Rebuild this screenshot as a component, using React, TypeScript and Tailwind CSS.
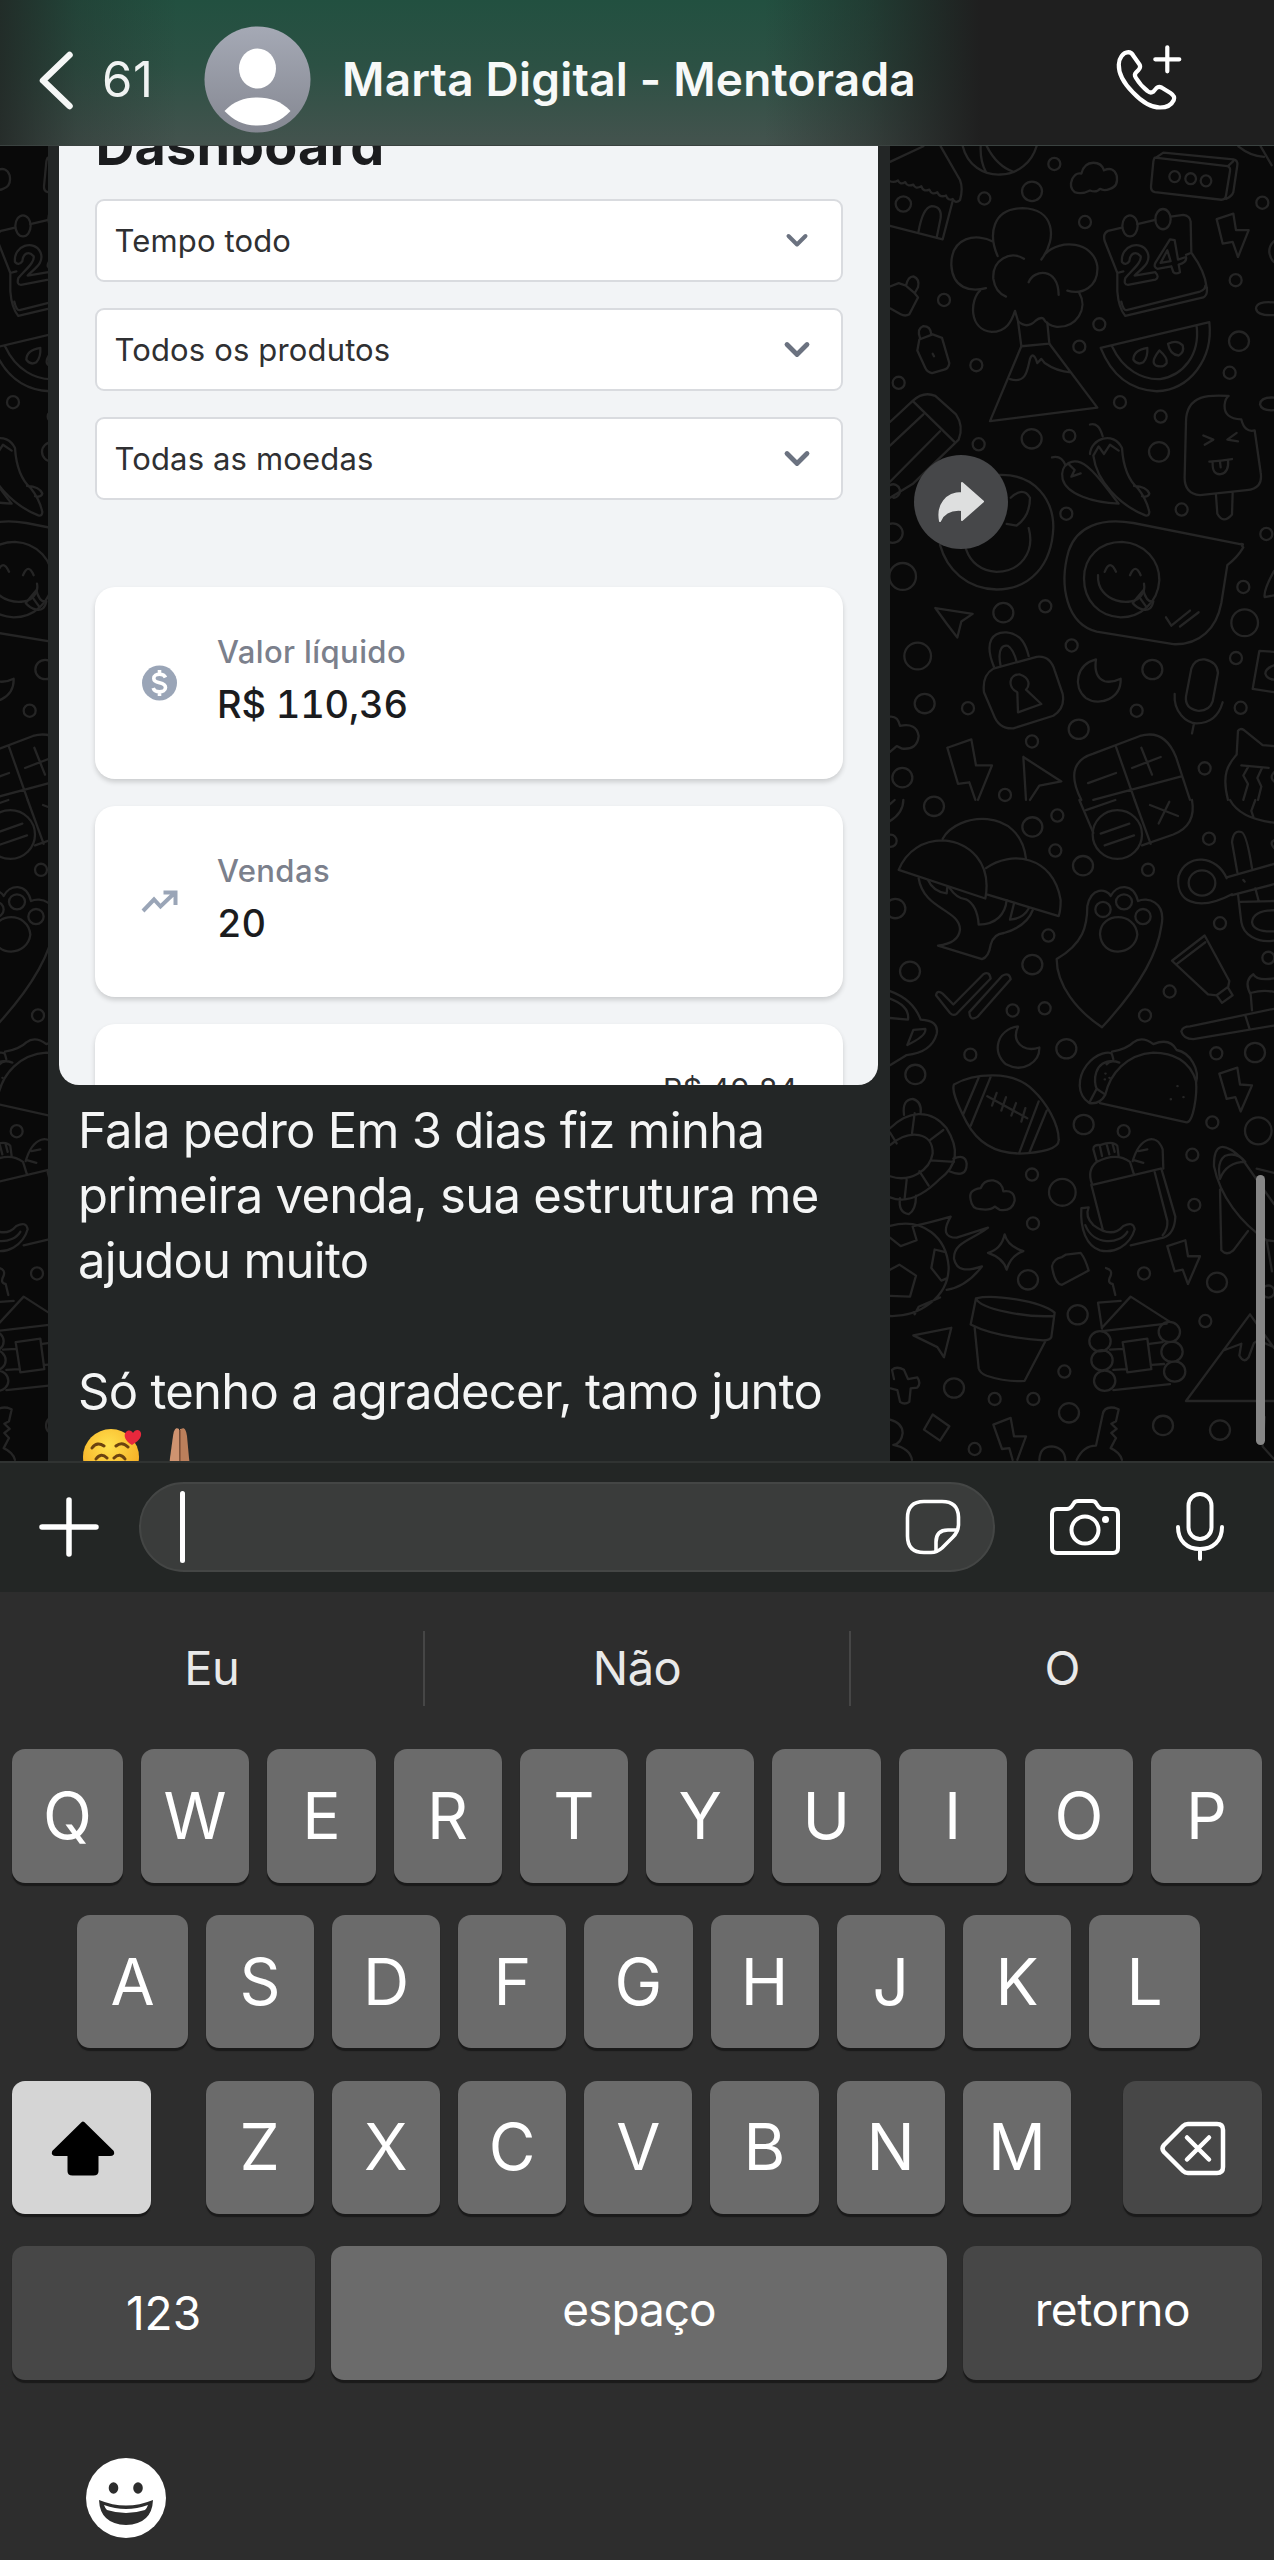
import type { ReactNode } from "react";

const ROW_ONE = ["Q", "W", "E", "R", "T", "Y", "U", "I", "O", "P"];
const ROW_TWO = ["A", "S", "D", "F", "G", "H", "J", "K", "L"];
const ROW_THREE = ["Z", "X", "C", "V", "B", "N", "M"];

const upperSmall = [
  [523, 57], [313, 139], [615, 195], [1147, 149], [1067, 333], [192, 380], [658, 438], [598, 491], [289, 535],
  [56, 577], [1049, 553], [720, 623], [842, 657], [296, 723], [568, 703], [905, 878], [559, 888], [496, 1108],
  [1090, 1062], [1068, 1231], [575, 1201], [264, 1350], [770, 1356], [1082, 1349], [456, 1429], [974, 1493],
  [375, 1556], [1159, 936],
];
const upperMedium = [
  [456, 122], [1077, 478], [455, 710], [837, 741], [370, 1123], [817, 1258], [134, 1339], [596, 1400], [67, 1515],
  [38, 934],
];
const upperLarge = [[68, 1037], [1094, 1147], [113, 1226]];

const lowerSmall = [
  [532, 37], [526, 120], [804, 166], [987, 92], [1020, 293], [505, 322], [869, 455], [795, 512], [398, 500],
  [494, 495], [271, 605], [1009, 602], [1165, 375], [997, 766], [731, 787], [937, 843], [456, 890], [459, 1006],
  [943, 962], [792, 1125], [976, 1238], [553, 1358], [344, 1423], [460, 1423], [284, 1542], [32, 97], [1165, 1168],
];
const lowerMedium = [
  [162, 15], [457, 64], [609, 156], [90, 407], [457, 391], [1125, 600], [559, 591], [106, 652], [611, 771],
  [444, 1140], [1011, 1146], [593, 1223], [222, 1397], [567, 1456], [849, 1486], [1020, 1497], [46, 258],
];
const lowerLarge = [[1135, 786], [547, 932]];

const upperPaths = [
  // house
  "M30 52 L130 15 M182 15 L240 95 Q250 115 240 143 Q226 152 218 140 Q205 146 198 132 Q180 138 172 124 Q155 132 148 118 Q130 124 124 110 Q106 118 100 106 Q82 112 76 100 Q60 108 54 96 Q42 102 30 98",
  "M218 145 L188 236 L30 204 M115 220 Q128 160 155 157 Q186 158 182 185 L170 232",
  "M47 152 A23 18 0 1 0 93 152 A23 18 0 1 0 47 152",
  // beach ball
  "M248 14 C262 60 310 84 362 82 C415 80 455 54 470 14 M302 14 Q300 50 318 76 M320 14 Q350 62 402 76",
  // cloud
  "M584 124 Q566 112 577 92 Q588 76 604 80 Q612 54 640 54 Q665 54 672 72 Q700 62 710 84 Q716 110 690 116 Q672 122 660 116 Q650 126 630 120 Q605 130 584 124 Z",
  // ticket box
  "M825 42 L1042 62 Q1052 64 1050 74 L1038 132 Q1036 142 1024 142 L825 124 Q812 122 813 110 L820 52 Q822 42 825 42 M828 42 L850 30 L1060 46 Q1074 48 1072 60 L1060 124 Q1056 134 1038 140 M1044 62 L1060 50",
  "M868 87 A16 13 0 1 0 900 87 A16 13 0 1 0 868 87 M916 92 A16 13 0 1 0 948 92 A16 13 0 1 0 916 92 M962 97 A16 13 0 1 0 994 97 A16 13 0 1 0 962 97",
  "M1075 15 Q1110 38 1152 40 M1142 15 L1175 60",
  // tree over the mountain
  "M353 276 C325 225 335 163 428 162 C520 163 535 230 484 284 M340 242 C290 220 212 230 214 298 C218 352 270 362 318 352",
  "M496 270 C540 235 640 240 652 300 C656 350 605 368 562 358 M300 358 C270 380 265 450 335 456 C380 456 395 430 405 406 L414 430 Q440 450 466 430 Q480 420 490 424 Q500 440 530 444 C590 446 625 400 598 364",
  "M432 282 C390 262 336 285 340 330 Q346 362 378 372 M446 338 C460 308 535 300 536 368 M414 430 L424 490 L508 484 L502 434",
  "M424 490 L330 668 L652 636 L508 484 M390 568 C440 580 442 545 450 520 Q460 500 472 530 L484 520 L494 530 Q530 550 572 552",
  // calendar
  "M712 316 L674 240 Q668 222 684 216 L726 208 M772 200 L826 190 M872 182 L910 178 Q930 180 932 194 L934 268 L918 273 M730 312 L712 316 L712 360 Q716 400 736 418 L970 374 Q984 368 980 350 Q974 310 934 268 M724 384 Q730 406 740 404 L960 360 Q976 356 976 346",
  "M727 204 A22 24 0 1 0 773 204 A22 24 0 1 0 727 204 M826 188 A23 24 0 1 0 872 188 A23 24 0 1 0 826 188",
  "M726 290 C720 250 784 236 802 266 C816 292 784 306 764 322 L826 314 Q840 326 826 332 L744 344 Q730 344 736 328 C760 306 786 290 782 276 C766 262 750 270 748 288 Q736 300 726 290 Z",
  "M870 236 L884 238 L894 284 L918 278 Q922 290 896 296 L900 314 Q888 320 880 314 L874 300 L832 306 Q820 302 826 292 Z M862 262 L842 292 L872 288 Z",
  // bolt
  "M1010 188 L1060 175 L1068 214 L1106 214 L1074 278 L1058 242 L1028 246 Z",
  "M1182 240 Q1166 252 1168 268 Q1172 284 1182 290 M1182 386 Q1130 382 1128 400 Q1130 418 1182 416 M1182 612 Q1142 610 1140 628 Q1144 644 1182 642",
  // bottles
  "M30 348 L56 340 L78 346 Q84 324 100 324 Q120 330 114 350 L104 364 L114 374 L88 414 Q76 420 62 414 L30 400 M80 348 L104 364",
  "M120 470 Q110 448 130 442 Q152 442 154 462 M118 474 L158 462 L186 470 L208 530 Q206 544 190 546 L156 554 Q142 552 136 542 L112 500 Z M158 508 L162 514",
  // watermelon
  "M662 494 L988 433 C1000 520 930 594 830 597 C750 594 695 560 662 494 Z M696 490 C730 548 790 570 840 568 C910 560 960 510 950 442",
  "M802 494 Q760 500 760 522 Q772 536 790 528 Q804 516 802 494 Z M838 500 Q810 528 828 536 Q850 542 860 530 Q864 518 838 500 Z M864 484 Q870 510 896 512 Q914 504 908 488 Q892 474 864 484 Z",
  // pencil
  "M30 670 L98 620 Q130 596 166 608 L228 652 Q252 680 236 712 L100 816 L30 850 M98 620 L222 716 M30 726 L130 652 M30 812 L180 692 M30 820 A20 16 0 1 1 40 850",
  // ice cream
  "M1046 608 C1000 606 918 600 918 670 L914 800 Q912 840 960 844 L1100 832 Q1150 828 1142 790 L1124 690 Q1094 696 1084 664 Q1030 662 1034 628 Q1036 614 1046 608 Z M1008 844 L1012 888 Q1030 914 1056 890 L1058 838",
  "M970 702 L1000 712 L974 724 M1070 696 L1042 712 L1074 716 M988 764 Q1024 762 1056 758 M998 766 Q996 796 1022 794 Q1048 790 1044 760 M1020 764 L1022 778",
  // peppers
  "M516 754 Q544 748 556 772 M548 806 C538 770 580 750 622 776 C660 800 690 840 716 864 C640 862 560 842 548 806 M566 770 L584 784 L574 800 L602 792 M630 676 Q656 670 668 704",
  "M630 746 C632 710 700 690 726 732 C730 780 748 810 774 828 Q800 854 808 884 Q808 894 796 892 C720 868 650 812 640 750 M640 750 L656 728 L672 746 L690 724 L716 738 M762 822 Q800 824 808 840 Q804 850 786 846",
  // donut behind the forward button
  "M350 796 C470 790 520 860 520 920 C516 1010 450 1068 350 1068 C260 1066 200 1020 180 962 M392 850 Q430 822 450 850 Q450 894 410 916 L380 912 M446 922 C466 980 420 1026 350 1026 Q280 1022 258 972",
  // sticker bubble
  "M1086 964 Q1094 958 1080 960 L760 910 C660 896 590 920 566 976 C536 1060 560 1150 650 1168 L880 1198 C960 1200 1010 1160 1024 1100 L1042 1010 Q1072 992 1090 968 Z",
  "M612 1042 C612 990 660 955 726 955 C796 958 838 1000 838 1046 C834 1100 780 1134 722 1134 C656 1132 612 1094 612 1042 Z M674 1026 Q690 994 708 1026 M750 1034 Q766 1004 782 1034 M654 1034 C650 1100 760 1112 784 1082 Q796 1070 792 1054",
  "M758 1100 L790 1070 Q800 1100 820 1096 Q814 1120 790 1116 Q770 1112 758 1100 M778 1086 L798 1108 M858 1134 L874 1154 L930 1118 M900 1156 L956 1122",
  // cursors
  "M166 1112 L278 1126 L244 1144 L232 1182 Q200 1150 166 1112 Z M430 1466 L544 1524 L478 1534 L450 1568 M430 1466 L438 1568",
  // padlock
  "M342 1252 C310 1190 340 1168 380 1170 C425 1174 438 1200 446 1226 M362 1250 C350 1204 372 1200 384 1202 Q400 1210 410 1240",
  "M340 1256 L470 1228 Q510 1224 524 1260 L548 1316 Q556 1350 520 1368 L400 1398 Q356 1400 340 1364 L312 1312 Q306 1272 340 1256 Z",
  "M412 1312 C380 1300 388 1268 420 1270 C450 1278 450 1296 438 1306 L484 1340 L414 1360 Z",
  // moon
  "M648 1234 C590 1246 576 1298 618 1326 C660 1348 724 1326 722 1280 Q696 1290 674 1286 Q640 1276 648 1234 Z",
  // microphone
  "M934 1256 Q944 1232 974 1234 Q1012 1240 1014 1266 L998 1334 Q988 1358 952 1356 Q914 1350 918 1322 Z M884 1316 C880 1360 920 1386 950 1386 Q1010 1386 1028 1336 M942 1386 L936 1410",
  // chat shapes at the edge
  "M1182 1024 Q1150 1070 1154 1086 L1182 1082 M1182 1216 L1138 1214 L1118 1304 L1182 1312 M1182 1248 Q1156 1256 1156 1268 Q1162 1282 1182 1282",
  // bolt
  "M202 1444 L274 1424 L288 1486 L336 1486 L294 1568 M202 1444 L234 1530 L268 1526 L286 1568",
  "M30 1370 Q54 1368 60 1392 Q110 1384 116 1416 Q112 1450 66 1446 L50 1440 L30 1454",
  // calculator
  "M604 1568 C560 1500 590 1470 640 1458 L780 1416 C840 1402 870 1430 888 1466 L930 1568 M708 1442 L764 1568 M640 1568 L904 1512 M624 1528 L708 1504 M756 1492 L842 1466 M784 1444 L816 1508",
  // cat
  "M1044 1568 C1022 1500 1050 1480 1070 1460 L1074 1404 Q1080 1396 1092 1402 L1148 1438 L1182 1440 M1084 1486 L1166 1492 M1104 1490 L1090 1510 L1104 1530 L1090 1568 M1146 1492 L1132 1516 L1144 1536 L1134 1568 M1182 1502 Q1168 1514 1182 1524",
];

const lowerPaths = [
  // calculator, lower half
  "M598 0 L640 78 M764 0 L812 104 M618 24 L706 0 M786 108 L880 82 Q950 60 936 0 M810 12 L894 38 M868 4 L836 56 M662 80 L748 56 M674 108 L762 84",
  "M638 82 A74 58 0 1 0 786 82 A74 58 0 1 0 638 82",
  "M1050 0 Q1080 44 1182 54 M1126 0 L1114 26 L1120 40",
  "M30 50 Q70 30 70 0 M30 10 L44 0",
  // mushrooms
  "M56 166 C80 120 130 96 188 96 C270 100 336 150 316 234 Z M188 92 C230 30 420 14 438 140 M318 162 C390 120 520 130 542 238 Q542 262 536 276 L320 224",
  "M116 186 C130 260 240 260 240 308 Q236 340 174 346 L306 378 Q326 374 332 344 Q340 318 372 316 Q440 300 458 262 M144 190 Q160 218 200 222 L202 206 M208 208 Q230 234 258 236 Q292 250 296 296 C350 296 376 270 380 238 M402 246 L390 284 Q430 282 446 258",
  // ticks
  "M168 464 Q172 450 188 460 L220 486 L310 414 Q328 406 332 424 L230 508 Q220 514 210 506 Z M268 504 L366 418 Q388 408 392 426 L294 514 Q270 528 268 504 Z",
  // paw
  "M530 378 C610 340 622 300 622 252 C634 206 680 210 692 228 C710 200 760 196 774 240 C800 230 860 240 844 300 C830 380 760 460 666 540 C590 500 530 440 530 378 Z",
  "M646 260 A23 18 0 1 0 692 260 A23 18 0 1 0 646 260 M708 242 A24 18 0 1 0 756 242 A24 18 0 1 0 708 242 M766 277 A23 18 0 1 0 812 277 A23 18 0 1 0 766 277",
  "M660 318 C662 266 766 264 772 320 C764 372 664 376 660 318 Z",
  // propeller
  "M1040 186 C1010 130 920 126 896 180 C884 240 950 268 1056 224 M926 197 A40 30 0 1 0 1006 197 A40 30 0 1 0 926 197 M1040 184 L1182 152 M1056 226 L1182 200 M1072 172 L1056 100 Q1060 70 1084 76 Q1100 80 1116 162 M1126 210 L1136 240 M1074 224 L1084 290 C1090 320 1130 340 1182 334 M1082 242 L1182 240 M1182 262 Q1120 262 1116 290 Q1120 314 1182 312 M1090 190 L1094 194",
  "M1182 96 Q1168 100 1182 114",
  // tube
  "M974 322 L876 382 L984 462 L1010 464 L1026 482 L1058 464 L1044 446 L1048 430 Z M976 338 L890 390 M1010 464 L1044 444",
  // brush
  "M904 550 Q908 538 930 538 L1182 496 M1182 536 L940 568 Q910 568 904 550 M1096 512 L1108 542 M1116 500 L1112 462 Q1090 430 1120 414 Q1130 430 1182 424 M1114 458 Q1150 450 1182 456",
  "M30 454 Q100 474 122 522 Q178 524 170 556 Q154 600 80 606 L30 630 M30 472 Q90 490 84 522 L30 518 M82 582 L100 546 L136 544 Q140 560 82 582",
  // moon
  "M414 538 C350 546 334 600 378 628 C430 650 480 622 478 588 Q450 596 428 586 Q396 570 414 538 Z",
  // football
  "M222 676 C280 650 400 640 460 690 C500 720 536 770 536 806 C540 830 480 838 420 840 C340 840 290 810 260 766 C230 720 214 690 222 676 Z M296 660 L250 746 M332 658 L272 774 M476 716 L418 838 M500 738 L448 838",
  "M322 704 L442 756 M350 696 L336 726 M378 706 L364 738 M408 720 L394 750 M436 732 L424 764",
  // taco
  "M660 720 L920 766 C940 766 952 700 948 668 C930 620 880 600 820 600 C740 604 690 650 676 700 Q660 724 628 720 C590 700 592 660 620 630 C650 600 690 596 696 604 L700 616 M696 598 Q740 592 760 576 Q786 560 820 580 Q870 564 890 594 C930 600 960 640 948 672 M700 620 C640 620 640 670 650 686 L676 700 M650 686 L630 716 M680 628 Q690 616 718 624",
  "M892 680 h1 M872 711 h1 M910 706 h1 M676 650 h1 M688 660 h1 M674 664 h1",
  // bolt
  "M1018 650 L1072 636 L1080 676 L1116 678 L1082 740 L1066 706 L1040 710 Z",
  // turtle
  "M72 748 Q66 712 98 710 Q126 716 122 744 M30 780 C80 740 150 730 200 780 C240 830 230 870 180 900 C130 940 80 960 30 944 M30 820 C90 780 160 790 158 840 C150 880 90 910 30 894 M104 744 L96 792 M190 784 L150 808 M222 860 L152 856 M146 916 L118 882 M74 946 L80 902 M30 790 L50 816 M208 882 Q260 900 260 864 Q256 840 220 852 M60 946 Q54 980 86 984 Q108 974 108 940",
  // cloud
  "M272 950 Q264 926 302 922 Q312 902 340 904 Q366 908 370 930 Q404 926 404 952 Q396 978 360 974 L344 966 Q330 976 300 972 Q276 972 272 950 Z",
  // lunch bag
  "M650 858 L640 830 Q640 818 660 820 Q700 808 712 822 L716 846 M660 824 L666 846 M680 818 L688 842 M698 818 L704 836 M636 912 Q620 880 650 860 Q710 836 750 860 L762 890 M640 914 L842 876 M758 858 C780 800 830 790 848 830 L850 876 M776 834 L802 830 M764 856 L790 862",
  "M634 914 L668 1020 M824 884 L862 1000 Q864 1020 848 1034 M844 876 L886 990 Q884 1030 850 1040 L752 1058 M604 970 L626 968 Q614 990 640 1010 C680 1034 710 1030 730 1012 Q760 1000 764 1020 C750 1060 700 1078 660 1070 C620 1060 600 1020 604 970 M616 1010 C640 1060 720 1056 742 1026",
  // rocket
  "M1182 960 L1084 850 Q1000 790 1002 870 C1020 940 1080 1004 1160 1046 L1182 1048 M1020 926 L1024 1070 Q1040 1084 1060 1070 L1104 1024 M1020 900 Q1040 860 1096 860 Q1070 834 1034 846 Q1010 860 1020 900 M1130 876 L1182 886 M1160 1046 L1176 1120",
  // comet ball
  "M30 1012 C130 990 200 1040 206 1110 C206 1180 120 1228 30 1226 M104 1012 Q150 1004 212 990 Q176 1040 230 1040 L324 1016 C280 1044 220 1050 222 1090 C230 1120 260 1120 306 1108 Q260 1156 200 1164 M30 1040 L62 1060 L110 1046 L98 1014 M30 1116 L58 1104 L108 1130 L90 1180 L30 1178 M196 1074 L164 1068 L154 1112 L184 1142 L202 1136 M180 1182 L116 1204 L104 1222",
  // sparkle
  "M374 1032 Q382 1060 430 1072 Q392 1082 380 1116 Q370 1088 324 1076 Q364 1068 374 1032 Z",
  "M516 1108 Q520 1090 546 1086 L558 1080 L602 1076 Q616 1090 626 1118 L546 1152 Q524 1150 516 1108 Z M678 1112 Q698 1116 692 1130 Q680 1148 698 1150 L706 1176",
  "M862 1060 L916 1046 L924 1084 L960 1084 L924 1150 L908 1116 L884 1120 Z",
  // flower pot
  "M288 1184 C340 1174 480 1190 524 1218 L514 1276 Q510 1284 490 1284 C420 1280 330 1270 272 1246 Z M288 1184 C300 1210 440 1230 522 1226 M284 1254 L296 1350 Q300 1362 320 1368 Q380 1384 434 1380 L496 1286",
  // log cabin
  "M666 1256 L654 1194 L722 1190 M668 1252 L752 1180 L870 1240 M666 1262 L860 1244 M690 1306 L728 1304 M808 1292 L848 1288 M700 1354 L738 1352 M816 1342 L852 1340 M700 1402 L870 1388 M728 1288 L802 1280 L814 1352 L742 1360 Z",
  "M628 1286 A32 24 0 1 0 692 1286 A32 24 0 1 0 628 1286 M634 1331 A32 24 0 1 0 698 1331 A32 24 0 1 0 634 1331 M642 1380 A32 24 0 1 0 706 1380 A32 24 0 1 0 642 1380 M836 1264 A32 24 0 1 0 900 1264 A32 24 0 1 0 836 1264 M844 1311 A32 24 0 1 0 908 1311 A32 24 0 1 0 844 1311 M852 1358 A32 24 0 1 0 916 1358 A32 24 0 1 0 852 1358",
  // mountain
  "M1182 1302 L1110 1222 L918 1428 L1182 1428 M1030 1308 L1084 1292 L1078 1320 Q1092 1340 1106 1324 L1122 1290 L1134 1284 L1182 1300",
  "M100 1272 L214 1254 L192 1324 L172 1300 Z",
  // plus
  "M36 1354 Q50 1344 72 1354 L84 1376 L112 1372 Q124 1386 112 1396 L92 1398 L88 1430 Q74 1438 60 1430 L52 1402 L32 1398 M36 1354 L42 1376",
  "M158 1460 L208 1488 L180 1522 L132 1496 Z M30 1472 Q68 1480 68 1504 Q64 1530 40 1532 Q90 1540 96 1568",
  "M340 1484 L392 1468 L402 1512 L438 1512 L412 1568 M340 1484 L366 1542 L388 1540 L398 1568",
  // guitar
  "M590 1568 Q610 1534 648 1534 L668 1460 Q672 1440 704 1444 L716 1448 L708 1476 L694 1482 L710 1494 L694 1504 L708 1516 L692 1540 Q720 1550 726 1568 M478 1568 Q480 1536 516 1536 Q554 1540 556 1568 M1154 1466 L1148 1536 L1182 1566",
];

function Rings({ points, rx, ry }: { points: number[][]; rx: number; ry: number }) {
  return (
    <>
      {points.map(([cx, cy]) => (
        <ellipse key={`${cx}-${cy}`} cx={cx} cy={cy} rx={rx} ry={ry} vectorEffect="non-scaling-stroke" />
      ))}
    </>
  );
}

function Doodles() {
  return (
    <>
      <g transform="translate(880 -6) scale(0.33333 0.42088)">
        {upperPaths.map((d) => (
          <path key={d} d={d} vectorEffect="non-scaling-stroke" />
        ))}
        <Rings points={upperSmall} rx={18} ry={14.5} />
        <Rings points={upperMedium} rx={30} ry={23} />
        <Rings points={upperLarge} rx={40} ry={32} />
      </g>
      <g transform="translate(880 654) scale(0.33333 0.42088)">
        {lowerPaths.map((d) => (
          <path key={d} d={d} vectorEffect="non-scaling-stroke" />
        ))}
        <Rings points={lowerSmall} rx={18} ry={14.5} />
        <Rings points={lowerMedium} rx={30} ry={23} />
        <Rings points={lowerLarge} rx={40} ry={32} />
      </g>
    </>
  );
}

function Wallpaper() {
  return (
    <svg
      className="absolute inset-0"
      width="1274"
      height="1315"
      viewBox="0 0 1274 1315"
      fill="none"
      stroke="#252525"
      strokeWidth="2.3"
      strokeLinecap="round"
      strokeLinejoin="round"
    >
      <Doodles />
      <g transform="translate(-1107 0)">
        <Doodles />
      </g>
    </svg>
  );
}

function Header() {
  return (
    <header className="flex h-[146px] shrink-0 items-center border-b border-[#3a4240] bg-[linear-gradient(to_right,rgba(33,38,36,0.85)_0%,rgba(33,38,36,0.3)_6%,rgba(33,38,36,0)_14%,rgba(31,31,31,0)_60%,rgba(31,31,31,0.4)_68%,rgba(31,31,31,1)_77%),linear-gradient(to_bottom,#225040_0%,#2c5144_45%,#44534e_100%)] pt-[14px]">
      <svg className="ml-[37px]" width="38" height="60" viewBox="0 0 38 60" fill="none" stroke="#f5f7f6" strokeWidth="6.5" strokeLinecap="round" strokeLinejoin="round">
        <path d="M32.5 5 L6 30.5 L32.5 56" />
      </svg>
      <span className="ml-[27px] w-[74px] text-[49px] leading-[60px] tracking-[0.6px] text-[#f0f3f2]">61</span>
      <svg className="ml-[27px]" width="108" height="108" viewBox="0 0 108 108">
        <defs>
          <linearGradient id="avatar" x1="0" y1="0" x2="0" y2="1">
            <stop offset="0" stopColor="#a5a9b5" />
            <stop offset="1" stopColor="#858892" />
          </linearGradient>
        </defs>
        <circle cx="54.500" cy="53.500" r="53" fill="url(#avatar)" />
        <ellipse cx="54.500" cy="42.500" rx="18.500" ry="20" fill="#fff" />
        <path d="M21.500 85 C31 75 42 71.500 54.500 71.500 C67 71.500 78 75 87.500 85 C78 95 68 99.500 54.500 99.500 C41 99.500 31 95 21.500 85 Z" fill="#fff" />
      </svg>
      <h1 className="-mt-[2px] ml-[31px] text-[46px] leading-[60px] font-semibold tracking-[0.2px] whitespace-nowrap text-[#f7f9f8]">
        Marta Digital - Mentorada
      </h1>
      <svg className="absolute top-[42px] left-[1112px]" width="72" height="72" viewBox="0 0 72 72" fill="none" stroke="#fff" strokeWidth="4.2" strokeLinecap="round" strokeLinejoin="round">
        <path d="M16.300 10.200 C19 10.200 20.500 12 21.500 14 L27.500 22.500 C28.800 24.500 28 26.500 26.500 28 L24 30.500 C22.500 32 22.800 34 23.700 35.500 C27 41 31 45.500 35.500 49 C37.500 50.800 39.500 51 41.500 49.500 L44.500 46 C46 44.600 47.500 44.500 49.500 45.500 L58.500 51 C61.500 53 63 55 61.800 58 C59.500 63 54 65.500 48 65.500 C40 65.500 30 60 21 50.500 C12 41.500 6.500 31 6.800 22.500 C7 16 11 10.500 16.300 10.200 Z" />
        <path d="M55.300 5.300 V29.300 M43.300 17.300 H67.300" />
      </svg>
    </header>
  );
}

function SelectBox({ label, large }: { label: string; large?: boolean }) {
  return (
    <div className="flex h-[83px] items-center justify-between rounded-[9px] border-[2.5px] border-[#d9dbdf] bg-white pr-[29px] pl-[18px]">
      <span className="text-[31px] leading-[40px] tracking-[0.15px] text-[#2f3032]">{label}</span>
      <svg width="30" height="20" viewBox="0 0 30 20" fill="none" stroke="#6b7280" strokeLinecap="round" strokeLinejoin="round">
        {large ? <path d="M5 4.5 L15 14.5 L25 4.5" strokeWidth="4.8" /> : <path d="M6.5 5 L15 13.5 L23.5 5" strokeWidth="4" />}
      </svg>
    </div>
  );
}

function StatCard({ icon, label, value }: { icon: ReactNode; label: string; value: string }) {
  return (
    <div className="flex h-[191.5px] rounded-[20px] bg-white pl-[46px] shadow-[0_3px_5px_rgba(0,0,0,0.16)]">
      <div className="mt-[77px] w-[76.5px]">{icon}</div>
      <div className="pt-[45px]">
        <div className="text-[31px] leading-[40px] font-medium tracking-[0.4px] text-[#7b808c]">{label}</div>
        <div className="mt-2 text-[38px] leading-[48px] font-medium tracking-[-0.2px] text-[#1b1c1e] tabular-nums">{value}</div>
      </div>
    </div>
  );
}

function DashboardImage() {
  return (
    <div className="mr-[12px] ml-[11px] h-[939px] overflow-hidden rounded-b-[20px] bg-[#f2f4f6] pr-[35px] pl-[35.5px]">
      <h2 className="-mt-[30px] ml-[1px] text-[54px] leading-[60px] font-bold tracking-[0.1px] text-[#1b1c1e]">Dashboard</h2>
      <div className="mt-[23px] space-y-[26px]">
        <SelectBox label="Tempo todo" />
        <SelectBox label="Todos os produtos" large />
        <SelectBox label="Todas as moedas" large />
      </div>
      <div className="mt-[87px] space-y-[27px]">
        <StatCard
          label="Valor líquido"
          value="R$ 110,36"
          icon={
            <svg width="38" height="38" viewBox="0 0 38 38">
              <circle cx="18.500" cy="19" r="17.5" fill="#9aa5b7" />
              <path d="M24.500 13.5 C23.500 11 21 10.200 18.500 10.200 C15.500 10.200 12.800 11.700 12.800 14.400 C12.800 20.500 24.500 17 24.500 23.500 C24.500 26.300 21.500 27.800 18.500 27.800 C15.500 27.800 13 26.700 12.200 24 M18.500 6 V10 M18.500 28 V32" fill="none" stroke="#fff" strokeWidth="3.6" />
            </svg>
          }
        />
        <StatCard
          label="Vendas"
          value="20"
          icon={
            <svg width="38" height="38" viewBox="0 0 38 38" fill="none" stroke="#9aa5b7" strokeWidth="4">
              <path d="M2 28 L13 16.500 L19.500 23.500 L33.500 10 M22.500 9.500 H34.500 V22" />
            </svg>
          }
        />
        <div className="h-[191.5px] rounded-[20px] bg-white pt-[49px] pr-[45px] text-right text-[30px] leading-[32px] tracking-[0.3px] text-[#2f3032] tabular-nums shadow-[0_3px_5px_rgba(0,0,0,0.16)]">
          R$ 49,84
        </div>
      </div>
    </div>
  );
}

function LoveFace() {
  return (
    <svg width="60" height="60" viewBox="0 0 60 60">
      <defs>
        <radialGradient id="face" cx="0.45" cy="0.3" r="0.75">
          <stop offset="0" stopColor="#ffe14d" />
          <stop offset="1" stopColor="#f5a51d" />
        </radialGradient>
      </defs>
      <circle cx="29" cy="29" r="28" fill="url(#face)" />
      <path d="M10 20 Q15 13 22 18 M34 18 Q40 13 46 19 M14 31 Q19 24 25 30 M32 30 Q38 24 43 31" fill="none" stroke="#6b4310" strokeWidth="3" strokeLinecap="round" />
      <path d="M50 17 C43 13 41 7 44 4 C47 1 50 3 51 5 C53 1 58 1 59 5 C60 10 55 14 50 17 Z" fill="#e8283c" />
    </svg>
  );
}

function PrayingHands() {
  return (
    <svg width="60" height="60" viewBox="0 0 60 60">
      <path d="M29 1 C26 -1 24 1 23 8 L20 30 L17 60 H29 Z" fill="#cf9370" />
      <path d="M31 1 C34 -1 36 1 37 8 L39 30 L43 60 H29 L30 1 Z" fill="#bb7f5b" />
      <path d="M30 2 V36" stroke="#8a573c" strokeWidth="1.5" />
    </svg>
  );
}

function Chat() {
  return (
    <main className="relative flex h-[1315px] shrink-0 items-start overflow-hidden bg-[#090909]">
      <Wallpaper />
      <div className="relative ml-[48px] h-[1315px] w-[842px] bg-[#232626]">
        <DashboardImage />
        <div className="mt-[13px] pl-[30px] text-[49px] leading-[65.2px] tracking-[-0.73px] whitespace-nowrap text-[#f4f5f5]">
          <div>Fala pedro Em 3 dias fiz minha</div>
          <div>primeira venda, sua estrutura me</div>
          <div>ajudou muito</div>
          <div>&nbsp;</div>
          <div>Só tenho a agradecer, tamo junto</div>
          <div className="mt-[4px] ml-[4px] flex gap-[8px]">
            <LoveFace />
            <PrayingHands />
          </div>
        </div>
      </div>
      <div className="relative mt-[309px] ml-[24px] flex size-[94px] items-center justify-center rounded-full bg-[#464749]">
        <svg width="48" height="42" viewBox="0 0 48 42" fill="#dedfdf" stroke="#dedfdf" strokeWidth="2" strokeLinejoin="round">
          <path d="M25 2 L46 20.500 L25 39 V29 C15 28 7 31 3 40 C0 24 9 12 25 12 Z" />
        </svg>
      </div>
      <div className="absolute right-[9px] bottom-[16px] h-[270px] w-[9px] rounded-full bg-[#868686]" />
    </main>
  );
}

function MessageBar() {
  return (
    <div className="flex h-[131px] shrink-0 items-center border-t-2 border-[#303332] bg-[#232625] pb-[2px]">
      <svg className="ml-[38px]" width="62" height="62" viewBox="0 0 62 62" stroke="#fff" strokeWidth="5.500" strokeLinecap="round">
        <path d="M31 4 V58 M4 31 H58" />
      </svg>
      <div className="ml-[39px] flex h-[90px] w-[856px] items-center justify-between rounded-full border-2 border-[#444645] bg-[#3a3c3b] pr-[31px] pl-[39px]">
        <div className="h-[72px] w-[5px] rounded-full bg-white" />
        <svg width="58" height="58" viewBox="0 0 58 58" fill="none" stroke="#fff" strokeWidth="3.600" strokeLinecap="round" strokeLinejoin="round">
          <path d="M20 3.500 H38 Q54 3.500 54.500 19 V27 Q54 34 49 39 L38 50 Q33 54.500 27 54.500 H20 Q3.500 54.500 3.500 38 V20 Q3.500 3.500 20 3.500 Z" />
          <path d="M32 53.500 V44 Q32 32 44 32 H53.500" />
        </svg>
      </div>
      <svg className="ml-[53px]" width="74" height="60" viewBox="0 0 74 60" fill="none" stroke="#fff" strokeWidth="4" strokeLinejoin="round">
        <path d="M9 12 H19 Q22 12 24 9 L26 6 Q27 4 30 4 H44 Q47 4 48 6 L50 9 Q52 12 55 12 H65 Q70 12 70 17 V51 Q70 56 65 56 H9 Q4 56 4 51 V17 Q4 12 9 12 Z" />
        <circle cx="37" cy="33" r="13.500" />
        <circle cx="57.500" cy="22.500" r="3.500" fill="#fff" stroke="none" />
      </svg>
      <svg className="ml-[53px]" width="50" height="72" viewBox="0 0 50 72" fill="none" stroke="#fff" strokeWidth="4" strokeLinecap="round">
        <rect x="13.500" y="3" width="23" height="45" rx="11.500" />
        <path d="M3 36 C3 50 12 58 25 58 C38 58 47 50 47 36 M25 58 V68" />
      </svg>
    </div>
  );
}

const keyBase = "flex h-[133.5px] items-center justify-center rounded-[13px] shadow-[0_3px_1px_#1a1a1a]";

function LetterKeys({ letters, wideEdges }: { letters: string[]; wideEdges?: boolean }) {
  return (
    <>
      {letters.map((letter, i) => {
        const edge = wideEdges && (i === 0 || i === letters.length - 1);
        return (
          <div key={letter} className={`${keyBase} bg-[#6b6b6b] text-[64px] text-white ${edge ? "w-[111px]" : "flex-1"}`}>
            {letter}
          </div>
        );
      })}
    </>
  );
}

function Keyboard() {
  return (
    <div className="flex-1 bg-[#2d2d2d]">
      <div className="flex h-[157px] items-center pb-[5px]">
        {["Eu", "Não", "O"].map((word, i) => (
          <div
            key={word}
            className={`flex h-[75px] flex-1 items-center justify-center text-[47px] tracking-[-0.5px] text-[#e9e9e9] ${i < 2 ? "border-r-2 border-[#464646]" : ""}`}
          >
            {word}
          </div>
        ))}
      </div>
      <div className="space-y-[32.3px]">
        <div className="flex gap-[18px] px-[12px]">
          <LetterKeys letters={ROW_ONE} wideEdges />
        </div>
        <div className="flex gap-[18px] pr-[74px] pl-[77px]">
          <LetterKeys letters={ROW_TWO} wideEdges />
        </div>
        <div className="flex px-[12px]">
          <div className={`${keyBase} w-[139px] bg-[#d5d5d5]`}>
            <svg className="mt-[5px] ml-[2px]" width="66" height="68" viewBox="0 0 66 68" fill="#000" stroke="#000" strokeWidth="4" strokeLinejoin="round">
              <path d="M33 4 L62 38 Q63 41 60 41 H46.500 V61 Q46.500 64 43.500 64 H22.500 Q19.500 64 19.500 61 V41 H6 Q3 41 4 38 Z" transform="translate(0 4) scale(1 0.84)" />
            </svg>
          </div>
          <div className="mr-[52px] ml-[54.5px] flex flex-1 gap-[18px]">
            <LetterKeys letters={ROW_THREE} />
          </div>
          <div className={`${keyBase} w-[139px] bg-[#474747]`}>
            <svg className="mt-[3px]" width="68" height="58" viewBox="0 0 68 58" fill="none" stroke="#fff" strokeWidth="4.500" strokeLinecap="round" strokeLinejoin="round">
              <path d="M29 4 H58 Q64 4 64 10 V47 Q64 53 58 53 H29 Q26 53 24 51 L5 32 Q2 28.500 5 25 L24 6 Q26 4 29 4 Z" />
              <path d="M28 17.500 L50 39.500 M50 17.500 L28 39.500" />
            </svg>
          </div>
        </div>
        <div className="flex gap-[16px] px-[12px] text-[46px] text-white">
          <div className={`${keyBase} w-[303px] bg-[#474747]`}>123</div>
          <div className={`${keyBase} flex-1 bg-[#6b6b6b] pb-[8px] tracking-[-1px]`}>espaço</div>
          <div className={`${keyBase} w-[299px] bg-[#474747] pb-[8px] tracking-[-0.4px]`}>retorno</div>
        </div>
      </div>
      <svg className="mt-[77px] ml-[85px]" width="82" height="82" viewBox="0 0 82 82">
        <circle cx="41" cy="41" r="40" fill="#fff" />
        <ellipse cx="28.500" cy="31" rx="4.800" ry="5.800" fill="#2d2d2d" />
        <ellipse cx="53" cy="31" rx="4.800" ry="5.800" fill="#2d2d2d" />
        <path d="M14 43 Q41 54 68 43 Q67 67 41 68 Q15 67 14 43 Z" fill="#2d2d2d" />
        <path d="M19 48 Q41 56 63 48 Q62 51 60 53 Q41 59 22 53 Q20 51 19 48 Z" fill="#fff" />
      </svg>
    </div>
  );
}

export default function App() {
  return (
    <div className="relative flex h-[2560px] w-[1274px] flex-col overflow-hidden bg-[#2d2d2d] font-[Inter,'Liberation_Sans',sans-serif]">
      <Header />
      <Chat />
      <MessageBar />
      <Keyboard />
    </div>
  );
}
